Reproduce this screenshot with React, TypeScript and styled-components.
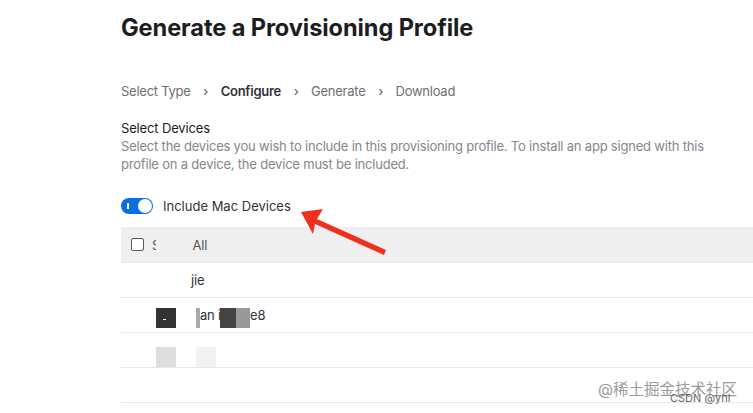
import * as React from 'react';
import styled, { createGlobalStyle } from 'styled-components';

const GlobalStyle = createGlobalStyle`
  html, body {
    margin: 0;
    padding: 0;
    background: #ffffff;
    font-family: Inter, "Liberation Sans", "Noto Sans CJK SC", sans-serif;
    overflow: hidden;
  }
`;

const Page = styled.div`
  position: relative;
  width: 753px;
  height: 413px;
  overflow: hidden;
  padding-left: 121px;
  box-sizing: border-box;
`;

const Title = styled.h1`
  margin: 0;
  padding-top: 14px;
  font-size: 23.6px;
  line-height: 28px;
  font-weight: 700;
  color: #1d1d1f;
  letter-spacing: -0.1px;
`;

const Steps = styled.nav`
  display: flex;
  align-items: center;
  margin-top: 40px;
  height: 18px;
  font-size: 13px;
  letter-spacing: -0.25px;
  color: #6e6e73;
`;

const Step = styled.span<{ $active?: boolean }>`
  font-weight: ${p => (p.$active ? 600 : 400)};
  color: ${p => (p.$active ? '#333336' : '#6e6e73')};
`;

const Chevron = styled.span`
  display: inline-flex;
  width: 30px;
  justify-content: center;
  color: #555;
`;

const Label = styled.div`
  margin-top: 19px;
  font-size: 13px;
  line-height: 18px;
  letter-spacing: -0.15px;
  color: #1d1d1f;
`;

const Desc = styled.p`
  margin: 0;
  width: 600px;
  font-size: 13px;
  line-height: 18px;
  letter-spacing: -0.2px;
  color: #86868b;
`;

const ToggleRow = styled.div`
  display: flex;
  align-items: center;
  gap: 10px;
  margin-top: 24px;
  height: 18px;
  font-size: 13px;
  color: #333336;
`;

const Toggle = styled.span`
  position: relative;
  width: 32px;
  height: 16px;
  border-radius: 8px;
  background: #0a6fdf;
  flex: none;

  &::before {
    content: '';
    position: absolute;
    left: 6px;
    top: 5px;
    width: 1.5px;
    height: 6px;
    background: #fff;
  }

  &::after {
    content: '';
    position: absolute;
    right: 1px;
    top: 1px;
    width: 14px;
    height: 14px;
    border-radius: 50%;
    background: #fff;
  }
`;

const Table = styled.div`
  margin-top: 12px;
  display: flex;
  flex-direction: column;
`;

const Row = styled.div<{ $header?: boolean }>`
  position: relative;
  display: flex;
  align-items: center;
  height: ${p => (p.$header ? 36 : 35)}px;
  box-sizing: border-box;
  padding-left: 10px;
  font-size: 13px;
  letter-spacing: -0.2px;
  color: #1d1d1f;
  background: ${p => (p.$header ? '#efefef' : '#fff')};
  border-bottom: 1px solid ${p => (p.$header ? '#e6e6e6' : '#e8e8e8')};
`;

const Check = styled.span`
  width: 11px;
  height: 11px;
  border: 1px solid #5a5a5a;
  border-radius: 2px;
  background: #fff;
  flex: none;
`;

const Name = styled.span<{ $pad: number; $muted?: boolean }>`
  padding-left: ${p => p.$pad}px;
  color: ${p => (p.$muted ? '#555' : '#333336')};
`;

const Mask = styled.span<{ $x: number; $w: number; $c: string; $top?: number; $h?: number }>`
  position: absolute;
  left: ${p => p.$x}px;
  top: ${p => p.$top ?? 10}px;
  width: ${p => p.$w}px;
  height: ${p => p.$h ?? 20}px;
  background: ${p => p.$c};
`;

const Dash = styled.span`
  position: absolute;
  left: 7px;
  top: 11px;
  width: 3px;
  height: 1px;
  background: #fff;
`;

const Arrow = styled.svg`
  position: absolute;
  left: 0;
  top: 0;
  pointer-events: none;
`;

const Watermark = styled.div`
  position: absolute;
  left: 598px;
  top: 377px;
  font-size: 15.5px;
  color: #9b9b9b;
  white-space: nowrap;
`;

const Sub = styled.div`
  position: absolute;
  left: 670px;
  top: 391px;
  font-size: 11px;
  color: #666;
  white-space: nowrap;
`;

export default function App() {
  return (
    <>
      <GlobalStyle />
      <Page>
        <Title>Generate a Provisioning Profile</Title>
        <Steps>
          <Step>Select Type</Step>
          <Chevron>›</Chevron>
          <Step $active>Configure</Step>
          <Chevron>›</Chevron>
          <Step>Generate</Step>
          <Chevron>›</Chevron>
          <Step>Download</Step>
        </Steps>
        <Label>Select Devices</Label>
        <Desc>
          Select the devices you wish to include in this provisioning profile. To install an app signed with this
          profile on a device, the device must be included.
        </Desc>
        <ToggleRow>
          <Toggle />
          Include Mac Devices
        </ToggleRow>
        <Table>
          <Row $header>
            <Check />
            <Name $pad={8} $muted>Select All</Name>
            <Mask $x={35} $w={34} $c="#efefef" $top={12} $h={14} />
          </Row>
          <Row>
            <Name $pad={60}>jie</Name>
          </Row>
          <Row>
            <Mask $x={35} $w={20} $c="#333" $top={10}>
              <Dash />
            </Mask>
            <Mask $x={75} $w={4} $c="#a9a9a9" $top={10} />
            <Name $pad={69}>an i</Name>
            <Mask $x={99} $w={16} $c="#444" $top={10} />
            <Mask $x={115} $w={14} $c="#999" $top={10} />
            <Name $pad={29}>e8</Name>
          </Row>
          <Row>
            <Mask $x={35} $w={20} $c="#dedede" $top={14} />
            <Mask $x={75} $w={20} $c="#f2f2f2" $top={14} />
          </Row>
          <Row />
          <Row>
            <Check style={{ marginTop: 2 }} />
          </Row>
        </Table>
        <Arrow width="753" height="413" viewBox="0 0 753 413">
          <polygon
            fill="#f0301f"
            points="301,212 323,209 317,219 386,250 384,255 315,224 313,234"
          />
        </Arrow>
        <Watermark>@稀土掘金技术社区</Watermark>
        <Sub>CSDN @yhl</Sub>
      </Page>
    </>
  );
}
